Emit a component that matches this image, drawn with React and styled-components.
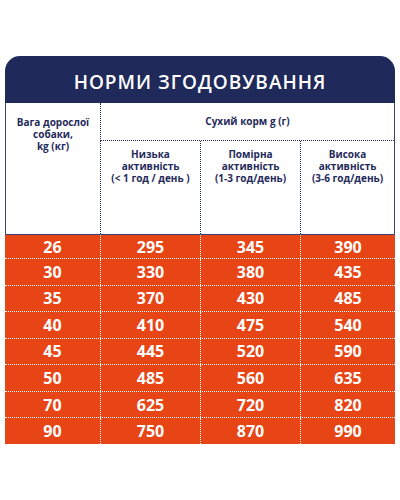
import React from "react";
import styled, { createGlobalStyle } from "styled-components";

const Global = createGlobalStyle`
  html, body { margin: 0; padding: 0; background: #fff; }
  body { font-family: "Open Sans", "Noto Sans", sans-serif; }
`;

const NAVY = "#1f2a5b";
const ORANGE = "#e84516";

const Page = styled.div`
  width: 400px;
  height: 500px;
  padding: 56px 5px 0 5px;
  box-sizing: border-box;
`;

const Title = styled.div`
  height: 47px;
  background: ${NAVY};
  border-radius: 15px 15px 0 0;
  display: flex;
  align-items: center;
  justify-content: center;
  color: #fff;
  font-size: 19px;
  font-weight: 600;
  letter-spacing: 1px;
  padding-top: 4px;
  box-sizing: border-box;
`;

const Head = styled.div`
  height: 132px;
  box-sizing: border-box;
  border: 1px solid #3c4370;
  border-top: none;
  display: grid;
  grid-template-columns: 94px 100px 100px 94px;
  grid-template-rows: 38px 1fr;
  color: ${NAVY};
  font-weight: 700;
  font-size: 10px;
  text-align: center;
`;

const WeightCell = styled.div`
  grid-row: 1 / 3;
  padding-top: 13px;
  line-height: 12px;
`;

const DryCell = styled.div`
  grid-column: 2 / 5;
  border-left: 1px dotted ${NAVY};
  border-bottom: 1px dotted ${NAVY};
  display: flex;
  align-items: center;
  justify-content: center;
  padding-bottom: 1px;
`;

const SubCell = styled.div`
  border-left: 1px dotted ${NAVY};
  padding-top: 7px;
  line-height: 12px;
`;

const Body = styled.div`
  height: 209px;
  background: ${ORANGE};
  display: grid;
  grid-template-rows: 23px repeat(7, 1fr);
`;

const Row = styled.div`
  display: grid;
  grid-template-columns: 95px 100px 100px 95px;
  border-top: ${(p) => (p.$first ? "none" : "1px dotted #fff")};
`;

const Num = styled.div`
  display: flex;
  align-items: center;
  justify-content: center;
  color: #fff;
  font-weight: 700;
  font-size: 16px;
  border-left: ${(p) => (p.$first ? "none" : "1px dotted #fff")};
`;

const data = [
  [26, 295, 345, 390],
  [30, 330, 380, 435],
  [35, 370, 430, 485],
  [40, 410, 475, 540],
  [45, 445, 520, 590],
  [50, 485, 560, 635],
  [70, 625, 720, 820],
  [90, 750, 870, 990],
];

export default function App() {
  return (
    <Page>
      <Global />
      <Title>НОРМИ ЗГОДОВУВАННЯ</Title>
      <Head>
        <WeightCell>
          Вага дорослої
          <br />
          собаки,
          <br />
          kg (кг)
        </WeightCell>
        <DryCell>Сухий корм g (г)</DryCell>
        <SubCell>
          Низька
          <br />
          активність
          <br />
          (&lt; 1 год / день )
        </SubCell>
        <SubCell>
          Помірна
          <br />
          активність
          <br />
          (1-3 год/день)
        </SubCell>
        <SubCell>
          Висока
          <br />
          активність
          <br />
          (3-6 год/день)
        </SubCell>
      </Head>
      <Body>
        {data.map((r, i) => (
          <Row key={i} $first={i === 0}>
            {r.map((v, j) => (
              <Num key={j} $first={j === 0}>
                {v}
              </Num>
            ))}
          </Row>
        ))}
      </Body>
    </Page>
  );
}
